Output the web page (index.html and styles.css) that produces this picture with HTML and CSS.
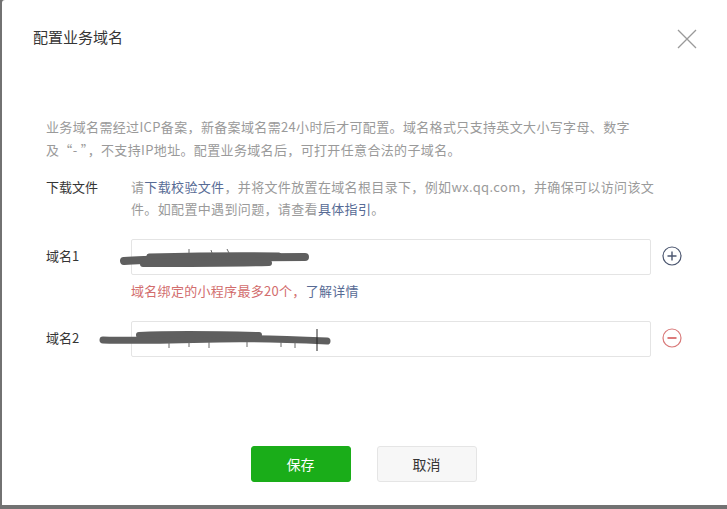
FILE: index.html
```html
<!DOCTYPE html>
<html lang="zh-CN">
<head>
    <meta charset="UTF-8">
    <meta name="viewport" content="width=device-width, initial-scale=1.0">
    <title>配置业务域名</title>
    <link rel="stylesheet" href="styles.css">
</head>
<body>
    <div class="dialog">
        <div class="dialog-head">
            <h3 class="dialog-title">配置业务域名</h3>
            <span class="close">
                <svg width="20" height="20" viewBox="0 0 20 20">
                    <path d="M1 1 L19 19 M19 1 L1 19" stroke="#9a9a9a" stroke-width="1.3" fill="none"/>
                </svg>
            </span>
        </div>
        <div class="dialog-body">
            <p class="tips">业务域名需经过ICP备案，新备案域名需24小时后才可配置。域名格式只支持英文大小写字母、数字及“- ”，不支持IP地址。配置业务域名后，可打开任意合法的子域名。</p>
            <div class="form-row">
                <label class="form-label">下载文件</label>
                <div class="form-text">请<a href="#">下载校验文件</a>，并将文件放置在域名根目录下，例如wx.qq.com，并确保可以访问该文件。如配置中遇到问题，请查看<a href="#">具体指引</a>。</div>
            </div>
            <div class="form-row field-row">
                <label class="form-label">域名1</label>
                <div class="field">
                    <div class="input-box"></div>
                    <svg class="scribble scribble-one" width="200" height="26" viewBox="0 0 200 26">
                        <path d="M5 16 C30 14 60 15 90 14 C110 13 140 12 186 12" stroke="#5f5f5f" stroke-width="8" stroke-linecap="round" fill="none"/>
                        <path d="M24 19 C60 19 100 19 150 18" stroke="#5f5f5f" stroke-width="6" stroke-linecap="round" fill="none"/>
                        <path d="M30 11 C70 10 110 9 160 10" stroke="#5f5f5f" stroke-width="5" stroke-linecap="round" fill="none"/>
                        <path d="M70 4 L70 8 M92 5 L93 8 M108 4 L110 8" stroke="#6a6a6a" stroke-width="1" fill="none"/>
                    </svg>
                    <p class="field-tip">域名绑定的小程序最多20个，<a href="#">了解详情</a></p>
                </div>
                <span class="op op-add">
                    <svg width="20" height="20" viewBox="0 0 20 20">
                        <circle cx="10" cy="10" r="9" stroke="#4c5770" stroke-width="1.2" fill="none"/>
                        <path d="M10 5.5 V14.5 M5.5 10 H14.5" stroke="#4c5770" stroke-width="1.4" fill="none"/>
                    </svg>
                </span>
            </div>
            <div class="form-row field-row">
                <label class="form-label">域名2</label>
                <div class="field">
                    <div class="input-box"></div>
                    <svg class="scribble scribble-two" width="240" height="26" viewBox="0 0 240 26">
                        <path d="M4 14 C40 15 80 14 120 13 C150 12 180 13 228 15" stroke="#5f5f5f" stroke-width="7" stroke-linecap="round" fill="none"/>
                        <path d="M40 9 C80 7 120 8 160 9" stroke="#5f5f5f" stroke-width="6" stroke-linecap="round" fill="none"/>
                        <path d="M70 16 L70 22 M90 16 L90 21 M110 16 L110 22 M148 16 L148 21 M182 16 L182 21 M196 16 L196 22" stroke="#6a6a6a" stroke-width="1" fill="none"/>
                        <path d="M218 3 V25" stroke="#222" stroke-width="1" fill="none"/>
                    </svg>
                </div>
                <span class="op op-del">
                    <svg width="20" height="20" viewBox="0 0 20 20">
                        <circle cx="10" cy="10" r="9" stroke="#d97a7a" stroke-width="1.2" fill="none"/>
                        <path d="M5.5 10 H14.5" stroke="#d45a5a" stroke-width="1.6" fill="none"/>
                    </svg>
                </span>
            </div>
        </div>
        <div class="dialog-foot">
            <button class="btn btn-primary">保存</button>
            <button class="btn btn-default">取消</button>
        </div>
    </div>
</body>
</html>
```

FILE: styles.css
```css
*{
    margin: 0;
    padding: 0;
    box-sizing: border-box;
}
body{
    background-color: #727272;
    font-family: "Noto Sans CJK SC", "Microsoft YaHei", sans-serif;
    font-size: 13px;
    height: 509px;
    overflow: hidden;
}
.dialog{
    margin-left: 2px;
    width: 725px;
    height: 505px;
    background-color: #fff;
    border-top-left-radius: 3px;
    display: flex;
    flex-direction: column;
}
.dialog-head{
    display: flex;
    justify-content: space-between;
    align-items: center;
    padding: 24px 30px 0 31px;
    height: 50px;
}
.dialog-title{
    font-size: 15px;
    font-weight: normal;
    color: #353535;
    line-height: 20px;
}
.close{
    display: flex;
    margin-top: 4px;
}
.dialog-body{
    padding: 65px 0 0 44px;
    flex: 1;
}
.tips{
    width: 596px;
    color: #9a9a9a;
    line-height: 23px;
    letter-spacing: 0.35px;
}
.form-row{
    display: flex;
    margin-top: 15px;
}
.form-label{
    width: 85px;
    color: #353535;
    line-height: 22px;
    flex-shrink: 0;
}
.form-text{
    width: 527px;
    color: #9a9a9a;
    line-height: 22px;
    letter-spacing: 0.35px;
}
.form-text a,
.field-tip a{
    color: #576b95;
    text-decoration: none;
}
.field-row{
    margin-top: 19px;
    align-items: flex-start;
}
.field-row + .field-row{
    margin-top: 20px;
}
.field-row .form-label{
    line-height: 33px;
}
.field{
    position: relative;
    width: 520px;
}
.input-box{
    height: 36px;
    border: 1px solid #e4e4e4;
    border-radius: 2px;
}
.scribble{
    position: absolute;
}
.scribble-one{
    left: -12px;
    top: 6px;
}
.scribble-two{
    left: -32px;
    top: 5px;
}
.field-tip{
    margin-top: 6px;
    color: #d26d6d;
    line-height: 20px;
    letter-spacing: 0.3px;
}
.op{
    display: flex;
    margin: 7px 0 0 11px;
}
.dialog-foot{
    display: flex;
    justify-content: center;
    gap: 26px;
    padding-bottom: 23px;
    padding-right: 2px;
}
.btn{
    width: 100px;
    height: 36px;
    border-radius: 3px;
    font-family: inherit;
    font-size: 14px;
    cursor: pointer;
}
.btn-primary{
    background-color: #1aad19;
    border: 1px solid #1aad19;
    color: #fff;
}
.btn-default{
    background-color: #f7f7f7;
    border: 1px solid #e5e5e5;
    color: #353535;
}
```
